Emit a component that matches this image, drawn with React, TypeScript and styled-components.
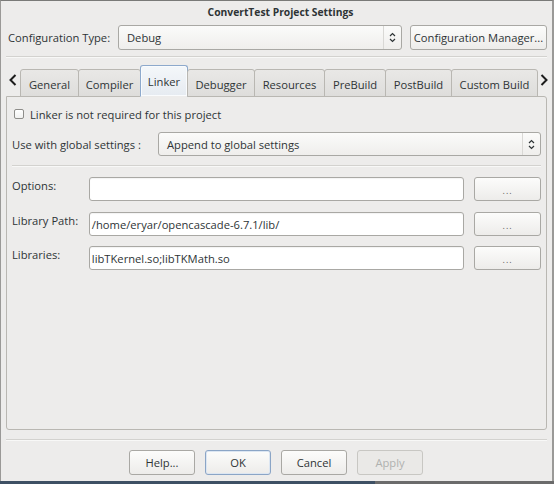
import React from "react";
import styled, { createGlobalStyle, css } from "styled-components";

const Global = createGlobalStyle`
  html, body {
    margin: 0;
    padding: 0;
    background: #4a4a4a;
  }
  body {
    font-family: "Open Sans", "DejaVu Sans", sans-serif;
    font-size: 11.2px;
    color: #2e3436;
  }
`;

const Screen = styled.div`
  width: 554px;
  height: 484px;
  display: flex;
  flex-direction: column;
  overflow: hidden;
`;

const Window = styled.div`
  height: 481px;
  box-sizing: border-box;
  background: #edeceb;
  border-top: 1px solid #7a7a78;
  border-left: 1px solid #9a9997;
  border-right: 2px solid #9a9997;
  display: flex;
  flex-direction: column;
`;

const Taskbar = styled.div`
  height: 3px;
  display: flex;
  div:first-child {
    width: 375px;
    background: #3e5064;
  }
  div:last-child {
    flex: 1;
    background: #6b6b6b;
  }
`;

const TitleBar = styled.div`
  height: 21px;
  display: flex;
  align-items: center;
  justify-content: center;
  font-size: 10.3px;
  font-weight: 700;
  color: #2e3436;
  padding-left: 8px;
`;

const Body = styled.div`
  padding: 3px 5px 0 5px;
  display: flex;
  flex-direction: column;
  flex: 1;
`;

const ConfigRow = styled.div`
  display: flex;
  align-items: center;
  height: 25px;
`;

const ConfigLabel = styled.div`
  width: 112px;
  padding-left: 2px;
  box-sizing: border-box;
  white-space: nowrap;
`;

const Combo = styled.div<{ $width?: number; $h?: number }>`
  box-sizing: border-box;
  height: ${p => p.$h ?? 25}px;
  ${p => (p.$width ? css`width: ${p.$width}px;` : css`flex: 1;`)}
  border: 1px solid #a9a8a4;
  border-radius: 3px;
  background: linear-gradient(#fbfbfa, #efeeec);
  display: flex;
  align-items: center;
  padding-left: 8px;
`;

const ComboText = styled.span`
  flex: 1;
`;

const ComboArrow = styled.span`
  width: 17px;
  height: 100%;
  border-left: 1px solid #d9d8d5;
  display: flex;
  align-items: center;
  justify-content: center;
`;

const PushButton = styled.button<{ $width?: number; $height?: number; $focus?: boolean; $disabled?: boolean }>`
  box-sizing: border-box;
  height: ${p => p.$height ?? 25}px;
  width: ${p => p.$width ?? 66}px;
  font-family: inherit;
  font-size: 11.2px;
  white-space: nowrap;
  color: ${p => (p.$disabled ? "#b0b1af" : "#2e3436")};
  border: 1px solid ${p => (p.$focus ? "#8ba5c6" : p.$disabled ? "#c8c7c3" : "#a9a8a4")};
  border-radius: 3px;
  background: ${p => (p.$disabled ? "#eae9e7" : "linear-gradient(#fcfcfb, #edecea)")};
  box-shadow: ${p => (p.$focus ? "inset 0 0 0 1px #dce6f2" : "none")};
  padding: 0;
  display: flex;
  align-items: center;
  justify-content: center;
`;

const Gap = styled.div<{ $w: number }>`
  width: ${p => p.$w}px;
  flex-shrink: 0;
`;

const Separator = styled.div<{ $mt: number }>`
  height: 1px;
  margin-top: ${p => p.$mt}px;
  background: #d3d2cf;
  border-bottom: 1px solid #f8f8f7;
`;

const TabRow = styled.div`
  display: flex;
  align-items: flex-end;
  height: 33px;
  margin-top: 6px;
  margin-bottom: -1px;
  position: relative;
  z-index: 1;
`;

const Scroller = styled.div`
  width: 14px;
  height: 27px;
  display: flex;
  align-items: center;
  justify-content: center;
  margin-bottom: 4px;
  flex-shrink: 0;
`;

const Tab = styled.div<{ $active?: boolean; $w: number }>`
  box-sizing: border-box;
  width: ${p => p.$w + 1}px;
  flex-shrink: 0;
  height: ${p => (p.$active ? 32 : 28)}px;
  padding-top: ${p => (p.$active ? 0 : 2)}px;
  display: flex;
  align-items: center;
  justify-content: center;
  border: 1px solid ${p => (p.$active ? "#8da9cc" : "#b9b7b2")};
  border-bottom: ${p => (p.$active ? "1px solid #edeceb" : "1px solid #b9b7b2")};
  border-radius: 3px 3px 0 0;
  background: ${p =>
    p.$active ? "linear-gradient(#f4f7fa, #e6ebf1)" : "linear-gradient(#e9e8e6, #dedddb)"};
  box-shadow: ${p => (p.$active ? "inset 0 0 0 1px #f9fbfd" : "none")};
  margin-right: -1px;
  white-space: nowrap;
`;

const Panel = styled.div`
  box-sizing: border-box;
  height: 334px;
  border: 1px solid #b9b7b2;
  border-radius: 0 3px 3px 3px;
  padding: 9px 5px 0 5px;
  display: flex;
  flex-direction: column;
`;

const CheckRow = styled.label`
  display: flex;
  align-items: center;
  height: 16px;
  padding-left: 2px;
`;

const CheckBox = styled.span`
  box-sizing: border-box;
  width: 10px;
  height: 10px;
  border: 1px solid #8e8d8a;
  border-radius: 2px;
  background: linear-gradient(#ffffff, #f1f1f0);
  margin-right: 6px;
`;

const FormRow = styled.div<{ $mt: number }>`
  display: flex;
  align-items: center;
  height: 24px;
  margin-top: ${p => p.$mt}px;
`;

const GlobalLabel = styled.div`
  width: 146px;
  white-space: nowrap;
`;

const FieldLabel = styled.div`
  width: 77px;
  align-self: flex-start;
  padding-top: 1px;
  white-space: nowrap;
`;

const TextField = styled.div`
  box-sizing: border-box;
  width: 376px;
  height: 24px;
  border: 1px solid #a9a8a4;
  border-radius: 3px;
  background: #ffffff;
  box-shadow: inset 0 1px 1px rgba(0, 0, 0, 0.05);
  display: flex;
  align-items: center;
  padding-left: 2px;
  margin-right: 10px;
`;

const Dots = styled.span`
  font-size: 9px;
  letter-spacing: 1px;
  color: #5f615e;
  padding-top: 2px;
`;

const ButtonBar = styled.div`
  display: flex;
  justify-content: center;
  gap: 10px;
  margin-top: 9px;
  padding-right: 1px;
`;

const UpDown = () => (
  <svg width="7" height="11" viewBox="0 0 7 11">
    <path d="M1 4 L3.5 1.5 L6 4 M1 7 L3.5 9.5 L6 7" fill="none" stroke="#2e3436" strokeWidth="1.2" />
  </svg>
);

const Chevron = ({ right }: { right?: boolean }) => (
  <svg width="8" height="12" viewBox="0 0 8 12">
    <path
      d={right ? "M1.5 1 L6.5 6 L1.5 11" : "M6.5 1 L1.5 6 L6.5 11"}
      fill="none"
      stroke="#1c1c1c"
      strokeWidth="2"
    />
  </svg>
);

const tabs: [string, number][] = [
  ["General", 58],
  ["Compiler", 62],
  ["Linker", 47],
  ["Debugger", 67],
  ["Resources", 70],
  ["PreBuild", 61],
  ["PostBuild", 66],
  ["Custom Build", 86],
];

const fields = [
  { label: "Options:", value: "", mt: 10 },
  { label: "Library Path:", value: "/home/eryar/opencascade-6.7.1/lib/", mt: 11 },
  { label: "Libraries:", value: "libTKernel.so;libTKMath.so", mt: 10 },
];

export default function App() {
  return (
    <Screen>
      <Global />
      <Window>
        <TitleBar>ConvertTest Project Settings</TitleBar>
        <Body>
          <ConfigRow>
            <ConfigLabel>Configuration Type:</ConfigLabel>
            <Combo $width={284}>
              <ComboText>Debug</ComboText>
              <ComboArrow>
                <UpDown />
              </ComboArrow>
            </Combo>
            <Gap $w={8} />
            <PushButton $width={137}>Configuration Manager...</PushButton>
          </ConfigRow>
          <Separator $mt={6} />
          <TabRow>
            <Scroller>
              <Chevron />
            </Scroller>
            {tabs.map(([t, w]) => (
              <Tab key={t} $w={w} $active={t === "Linker"}>
                {t}
              </Tab>
            ))}
            <Scroller>
              <Chevron right />
            </Scroller>
          </TabRow>
          <Panel>
            <CheckRow>
              <CheckBox />
              Linker is not required for this project
            </CheckRow>
            <FormRow $mt={10}>
              <GlobalLabel>Use with global settings :</GlobalLabel>
              <Combo $h={24}>
                <ComboText>Append to global settings</ComboText>
                <ComboArrow>
                  <UpDown />
                </ComboArrow>
              </Combo>
            </FormRow>
            <Separator $mt={9} />
            {fields.map(f => (
              <FormRow key={f.label} $mt={f.mt}>
                <FieldLabel>{f.label}</FieldLabel>
                <TextField>{f.value}</TextField>
                <PushButton $width={67} $height={24}>
                  <Dots>...</Dots>
                </PushButton>
              </FormRow>
            ))}
          </Panel>
          <Separator $mt={9} />
          <ButtonBar>
            <PushButton>Help...</PushButton>
            <PushButton $focus>OK</PushButton>
            <PushButton>Cancel</PushButton>
            <PushButton $disabled>Apply</PushButton>
          </ButtonBar>
        </Body>
      </Window>
      <Taskbar>
        <div />
        <div />
      </Taskbar>
    </Screen>
  );
}
